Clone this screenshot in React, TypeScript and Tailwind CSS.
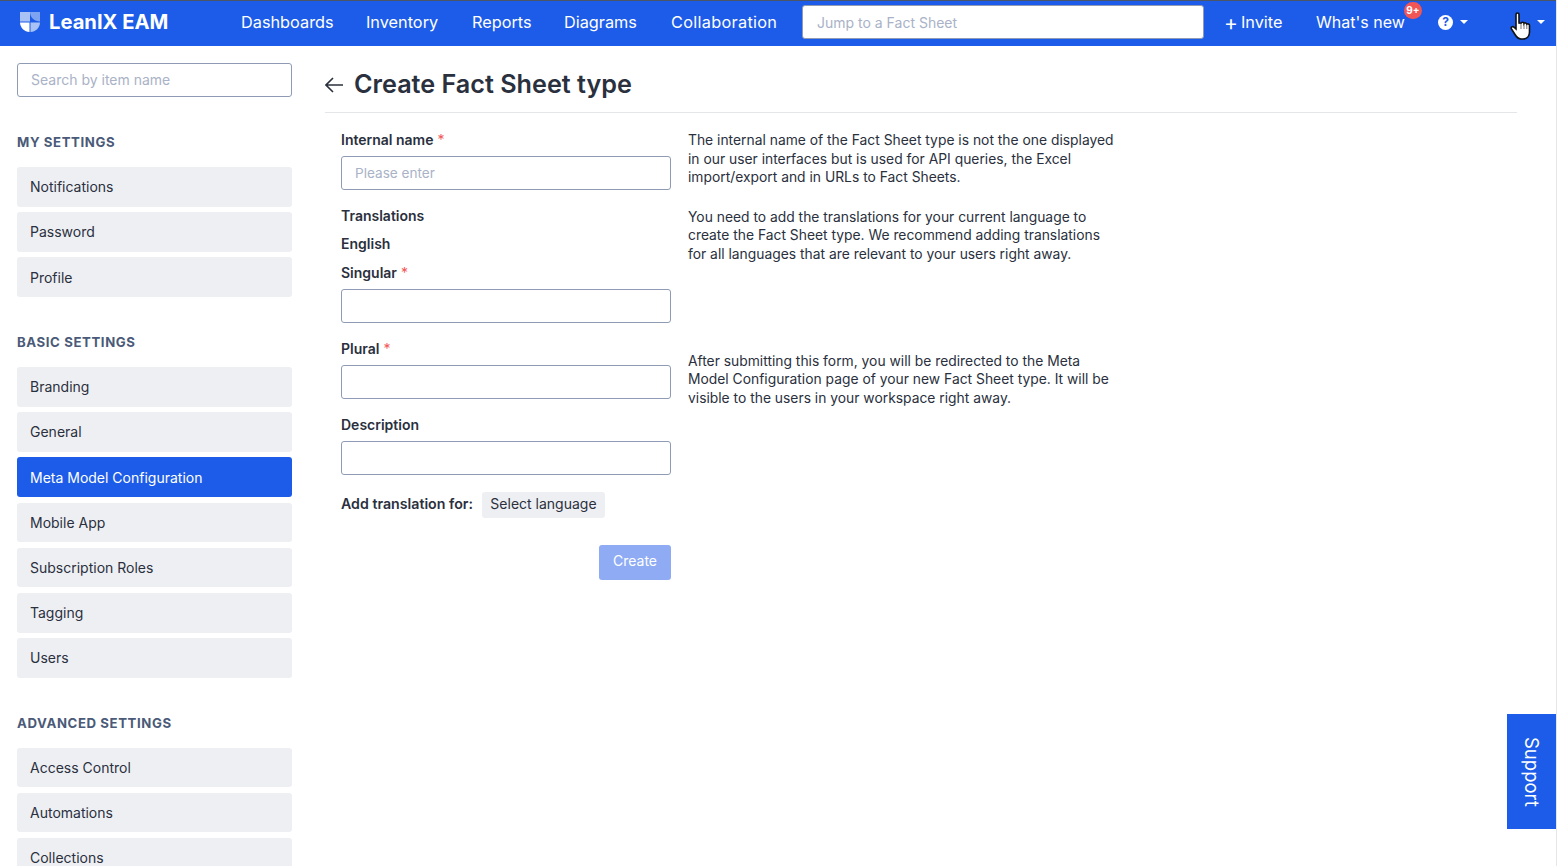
const font = { fontFamily: 'Inter, "Noto Sans", sans-serif' };

const navLinks = ['Dashboards', 'Inventory', 'Reports', 'Diagrams', 'Collaboration'];

const sections = [
  { title: 'MY SETTINGS', items: ['Notifications', 'Password', 'Profile'] },
  { title: 'BASIC SETTINGS', items: ['Branding', 'General', 'Meta Model Configuration', 'Mobile App', 'Subscription Roles', 'Tagging', 'Users'] },
  { title: 'ADVANCED SETTINGS', items: ['Access Control', 'Automations', 'Collections'] },
];

function Caret() {
  return <span className="inline-block h-0 w-0 border-x-[4px] border-t-[4px] border-x-transparent border-t-white" />;
}

function Label({ text, required }: { text: string; required?: boolean }) {
  return (
    <div className="h-[19px] text-[14px] leading-[19px] font-semibold text-[#2a303d]">
      {text}
      {required && <span className="ml-1 font-normal text-[#f25555]">*</span>}
    </div>
  );
}

function Field({ placeholder }: { placeholder?: string }) {
  return (
    <input
      placeholder={placeholder}
      className="mt-[7px] block h-[34px] w-[330px] rounded-[3px] border border-[#8f9bb5] bg-white px-[13px] text-[13.6px] outline-none placeholder:text-[#a9b2c6]"
    />
  );
}

export default function App() {
  return (
    <div className="relative h-[866px] w-[1557px] overflow-hidden border-r border-[#e4e6ea] bg-white" style={font}>
      {/* Top bar */}
      <header className="flex h-[46px] items-center border-t border-[#4a5568] bg-[#1c5ce8] pb-[3px] text-white">
        <div className="ml-[20px] flex w-[221px] items-center gap-[9px]">
          <svg width="20" height="20" viewBox="0 0 20 20">
            <path d="M0 0h10v9.500H0z" fill="#a9c2f6" />
            <path d="M10 0h10v9.500C14.500 9.500 10 5.500 10 0z" fill="#7ea3f1" />
            <path d="M0 10.500h9.500V20C4.500 20 0 15.500 0 10.500z" fill="#fff" />
            <path d="M10.500 10.500H20C20 15.500 15.500 20 10.500 20z" fill="#a9c2f6" />
          </svg>
          <span className="text-[20.2px] font-bold">LeanIX EAM</span>
        </div>
        <nav className="flex w-[561px] text-[16.3px]">
          <span className="w-[125px]">{navLinks[0]}</span>
          <span className="w-[106px]">{navLinks[1]}</span>
          <span className="w-[92px]">{navLinks[2]}</span>
          <span className="w-[107px]">{navLinks[3]}</span>
          <span className="tracking-[0.3px]">{navLinks[4]}</span>
        </nav>
        <div className="flex h-[34px] w-[402px] items-center rounded-[3px] border border-[#8f9bb5] bg-white px-[14px] text-[14px] text-[#a9b2c6]">
          Jump to a Fact Sheet
        </div>
        <span className="ml-[20px] flex w-[92px] items-center gap-[3px] text-[16.3px]">
          <span className="text-[21px] leading-none">+</span>Invite
        </span>
        <span className="relative w-[122px] text-[16px]">
          What's new
          <span className="absolute top-[-8px] left-[88px] flex h-[17px] w-[18px] items-center justify-center rounded-full bg-[#f25555] text-[10px] font-bold">9+</span>
        </span>
        <span className="flex h-[15px] w-[15px] items-center justify-center rounded-full bg-white text-[12px] font-bold text-[#1c5ce8]">?</span>
        <span className="ml-[7px] flex"><Caret /></span>
        <span className="ml-[69px] flex"><Caret /></span>
      </header>

      <div className="flex">
        {/* Sidebar */}
        <aside className="w-[325px] shrink-0 pl-[17px]">
          <input
            placeholder="Search by item name"
            className="mt-[17px] mb-[35px] block h-[34px] w-[275px] rounded-[3px] border border-[#8f9bb5] bg-white px-[13px] pb-[2px] text-[14px] outline-none placeholder:text-[#a9b2c6]"
          />
          {sections.map((section) => (
            <div key={section.title} className="mb-[35px]">
              <div className="mb-[15px] h-[20px] text-[13.2px] leading-[20px] font-bold tracking-[0.6px] text-[#4a5a78]">{section.title}</div>
              <div className="flex w-[275px] flex-col gap-[5.6px]">
                {section.items.map((item) => {
                  const active = item === 'Meta Model Configuration';
                  return (
                    <div
                      key={item}
                      className={
                        active
                          ? 'flex h-[39.6px] shrink-0 items-center rounded-[3px] bg-[#1c5ce8] px-[13px] text-[14px] text-white'
                          : 'flex h-[39.6px] shrink-0 items-center rounded-[3px] bg-[#eeeff3] px-[13px] text-[14px] text-[#2a303d]'
                      }
                    >
                      {item}
                    </div>
                  );
                })}
              </div>
            </div>
          ))}
        </aside>

        {/* Main */}
        <main className="w-[1192px]">
          <div className="flex h-[67px] items-center gap-[11px] border-b border-[#e4e6ea] pt-[11px]">
            <svg width="18" height="16" viewBox="0 0 18 16" fill="none" stroke="#2a303d" strokeWidth="1.600">
              <path d="M1 8h17M8 1 1 8l7 7" />
            </svg>
            <h1 className="text-[25.2px] font-semibold text-[#2a303d]">Create Fact Sheet type</h1>
          </div>
          <div className="flex pt-[17px] pl-[16px]">
            <div className="w-[330px]">
              <Label text="Internal name" required />
              <Field placeholder="Please enter" />
              <div className="mt-[16px]"><Label text="Translations" /></div>
              <div className="mt-[9px]"><Label text="English" /></div>
              <div className="mt-[10px]"><Label text="Singular" required /></div>
              <Field />
              <div className="mt-[16px]"><Label text="Plural" required /></div>
              <Field />
              <div className="mt-[16px]"><Label text="Description" /></div>
              <Field />
              <div className="mt-[17px] flex h-[26px] items-center gap-[9px]">
                <span className="pb-[3px] text-[14.2px] font-semibold text-[#2a303d]">Add translation for:</span>
                <span className="flex h-[26px] w-[123px] items-center justify-center rounded-[3px] bg-[#eeeff3] pb-[3px] text-[14px] text-[#2a303d]">Select language</span>
              </div>
              <div className="mt-[27px] flex justify-end">
                <span className="flex h-[35px] w-[72px] items-center justify-center rounded-[3px] bg-[#8eabf3] pb-[4px] text-[14px] text-white">Create</span>
              </div>
            </div>
            <div className="mt-[1px] ml-[17px] w-[440px] text-[13.85px] leading-[18.6px] text-[#2a303d]">
              <p>The internal name of the Fact Sheet type is not the one displayed<br />in our user interfaces but is used for API queries, the Excel<br />import/export and in URLs to Fact Sheets.</p>
              <p className="mt-[21px]">You need to add the translations for your current language to<br />create the Fact Sheet type. We recommend adding translations<br />for all languages that are relevant to your users right away.</p>
              <p className="mt-[88px]">After submitting this form, you will be redirected to the Meta<br />Model Configuration page of your new Fact Sheet type. It will be<br />visible to the users in your workspace right away.</p>
            </div>
          </div>
        </main>
      </div>

      {/* Support tab */}
      <div className="absolute top-[714px] right-0 flex h-[115px] w-[49px] items-center justify-center bg-[#1c5ce8] text-[18.5px] text-white [writing-mode:vertical-rl]">
        Support
      </div>

      {/* Cursor over the avatar */}
      <svg className="absolute top-[12px] left-[1509px]" width="24" height="28" viewBox="0 0 24 28">
        <path d="M7 2.500c0-2 3-2 3 0V11l2 .2c.3-1.400 2.800-1.400 3 .3 .5-1 2.700-.8 2.800.7 .8-.6 2.700-.3 2.700 1.300V20c0 4-2.500 7-6.500 7H12c-3 0-4.500-2-6-4.500L2.500 17c-1-1.700 1-3.300 2.500-1.800L7 17z" fill="#fff" stroke="#111" strokeWidth="1.600" />
        <path d="M12 11.500V17M15 11.500V17M17.800 12.500V17" fill="none" stroke="#555" strokeWidth="0.800" />
      </svg>
    </div>
  );
}
